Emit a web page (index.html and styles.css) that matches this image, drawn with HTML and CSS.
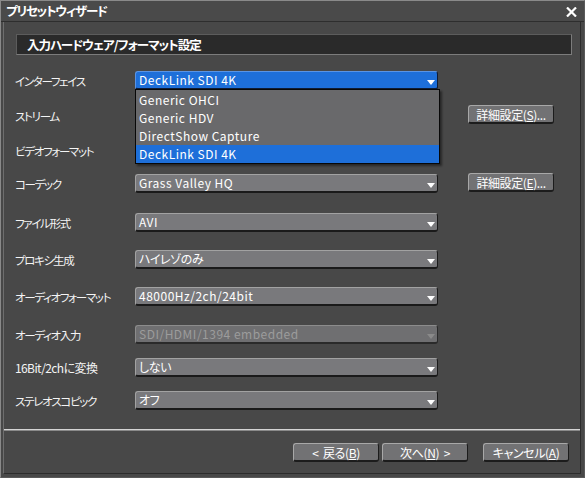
FILE: index.html
```html
<!DOCTYPE html>
<html lang="ja">
<head>
<meta charset="utf-8">
<title>プリセットウィザード</title>
<link rel="stylesheet" href="styles.css">
</head>
<body>
<div class="window">
  <div class="titlebar">
    <span class="title">プリセットウィザード</span>
    <svg class="close" width="11" height="10" viewBox="0 0 11 10"><path d="M1 0.5 L10 9.5 M10 0.5 L1 9.5" stroke="#fff" stroke-width="2.2" fill="none"/></svg>
  </div>
  <div class="client">
    <div class="section-head">入力ハードウェア/フォーマット設定</div>
    <div class="form">
      <div class="row">
        <span class="label">インターフェイス</span>
        <div class="select active"><span class="val">DeckLink SDI 4K</span><i class="arrow"></i>
          <ul class="list">
            <li>Generic OHCI</li>
            <li>Generic HDV</li>
            <li>DirectShow Capture</li>
            <li class="sel">DeckLink SDI 4K</li>
          </ul>
        </div>
      </div>
      <div class="row">
        <span class="label">ストリーム</span>
        <div class="spacer"></div>
        <button class="btn small">詳細設定(<u>S</u>)...</button>
      </div>
      <div class="row">
        <span class="label">ビデオフォーマット</span>
      </div>
      <div class="row">
        <span class="label">コーデック</span>
        <div class="select"><span class="val">Grass Valley HQ</span><i class="arrow"></i></div>
        <button class="btn small">詳細設定(<u>E</u>)...</button>
      </div>
      <div class="row">
        <span class="label">ファイル形式</span>
        <div class="select"><span class="val">AVI</span><i class="arrow"></i></div>
      </div>
      <div class="row">
        <span class="label">プロキシ生成</span>
        <div class="select"><span class="val jp">ハイレゾのみ</span><i class="arrow"></i></div>
      </div>
      <div class="row">
        <span class="label">オーディオフォーマット</span>
        <div class="select"><span class="val">48000Hz/2ch/24bit</span><i class="arrow"></i></div>
      </div>
      <div class="row">
        <span class="label">オーディオ入力</span>
        <div class="select disabled"><span class="val">SDI/HDMI/1394 embedded</span><i class="arrow"></i></div>
      </div>
      <div class="row">
        <span class="label latin">16Bit/2chに変換</span>
        <div class="select"><span class="val jp">しない</span><i class="arrow"></i></div>
      </div>
      <div class="row">
        <span class="label">ステレオスコピック</span>
        <div class="select"><span class="val jp">オフ</span><i class="arrow"></i></div>
      </div>
    </div>
    <div class="sep"></div>
    <div class="footer">
      <button class="btn">&lt;&nbsp;&nbsp;戻る(<u>B</u>)</button>
      <button class="btn">次へ(<u>N</u>)&nbsp;&nbsp;&gt;</button>
      <button class="btn cancel">キャンセル(<u>A</u>)</button>
    </div>
  </div>
</div>
</body>
</html>
```

FILE: styles.css
```css
* { box-sizing: border-box; }
html, body { margin: 0; padding: 0; }
body {
  width: 585px;
  height: 478px;
  background: #484848;
  font-family: "Noto Sans CJK JP", "DejaVu Sans", sans-serif;
  font-size: 12px;
  color: #f4f4f4;
  font-feature-settings: "palt";
  overflow: hidden;
}
.window {
  width: 585px;
  height: 478px;
  border: 1px solid #8a8a8a;
  border-right-color: #5a5a5a;
  border-bottom-color: #5a5a5a;
  background: #484848;
  display: flex;
  flex-direction: column;
}
.titlebar {
  height: 21px;
  flex: none;
  display: flex;
  align-items: center;
  justify-content: space-between;
  padding: 0 7px 0 5px;
  border-bottom: 1px solid #2e2e2e;
  background: #4a4a4a;
}
.title {
  font-weight: bold;
  font-size: 12.5px;
  letter-spacing: -1.2px;
  color: #fff;
  line-height: 1;
}
.close { display: block; margin-top: 1px; }
.client {
  flex: 1;
  margin: 0 3px 3px 2px;
  border: 1px solid #6e6e6e;
  border-right-color: #2c2c2c;
  border-bottom-color: #2c2c2c;
  border-top: none;
  display: flex;
  flex-direction: column;
  padding-top: 12px;
}
.section-head {
  margin: 0 8px 0 12px;
  height: 21px;
  background: #2a2a2a;
  border: 1px solid #7c7c7c;
  border-top-color: #5c5c5c;
  border-left-color: #5c5c5c;
  padding-left: 10px;
  font-weight: bold;
  font-size: 12.5px;
  letter-spacing: -1px;
  line-height: 19px;
  color: #fff;
}
.form {
  margin-top: 16px;
  padding-left: 11px;
  display: grid;
  grid-template-rows: 35px 35px 33px 39px 37px 37px 38px 33px 33px 18px;
}
.row {
  display: flex;
  align-items: flex-start;
  height: 18px;
}
.label {
  width: 120px;
  flex: none;
  font-size: 11.5px;
  line-height: 18px;
  letter-spacing: -1.3px;
  padding-top: 1px;
  white-space: nowrap;
}
.label.latin { font-size: 12px; letter-spacing: -0.6px; }
.spacer { width: 303px; flex: none; }
.select {
  position: relative;
  width: 303px;
  height: 19px;
  flex: none;
  display: flex;
  align-items: center;
  background: #79797c;
  border: 1px solid #a2a2a2;
  border-right-color: #1a1a1a;
  border-bottom: 2px solid #1a1a1a;
  border-radius: 3px;
  padding-left: 3px;
  padding-right: 2px;
  color: #fff;
  letter-spacing: 0.5px;
}
.select .val { flex: 1; line-height: 16px; white-space: nowrap; }
.select .val.jp { letter-spacing: -0.4px; }
.arrow {
  width: 0;
  height: 0;
  border-left: 4px solid transparent;
  border-right: 4px solid transparent;
  border-top: 5px solid #fff;
  margin-top: 5px;
}
.select.active {
  background: #1e6fd9;
  border-color: #5a94e4;
  border-right-color: #101c33;
  border-bottom-color: #101c33;
}
.select.disabled {
  background: #6f6f71;
  border-color: #8c8c8c;
  border-right-color: #2a2a2a;
  border-bottom-color: #2a2a2a;
  color: #9c9c9c;
}
.select.disabled .arrow { border-top-color: #8a8a8a; }
.list {
  position: absolute;
  left: -1px;
  top: 17px;
  width: 305px;
  margin: 0;
  padding: 1px 0 0 0;
  list-style: none;
  background: #69696b;
  border: 1px solid #080808;
  box-shadow: 2px 2px 2px rgba(0,0,0,0.45);
  z-index: 5;
}
.list li {
  height: 18px;
  line-height: 18px;
  padding-left: 3px;
  color: #fff;
}
.list li.sel { background: #1e6fd9; }
.btn {
  font: inherit;
  font-feature-settings: "palt";
  width: 86px;
  height: 19px;
  padding: 0;
  background: #727274;
  color: #fff;
  border: 1px solid #a8a8a8;
  border-right-color: #1c1c1c;
  border-bottom: 2px solid #1c1c1c;
  border-radius: 3px;
  line-height: 15px;
  letter-spacing: -0.4px;
  text-align: center;
}
.btn u { text-underline-offset: 1px; }
.btn.small { margin-left: 30px; margin-top: -1px; width: 86px; }
.sep {
  margin-top: 20px;
  height: 2px;
  background: #d4d4d4;
  border-bottom: 1px solid #8a8a8a;
}
.footer {
  margin-top: 12px;
  display: flex;
  justify-content: flex-end;
  padding-right: 11px;
  gap: 3px;
}
.btn.cancel { margin-left: 12px; }
```
